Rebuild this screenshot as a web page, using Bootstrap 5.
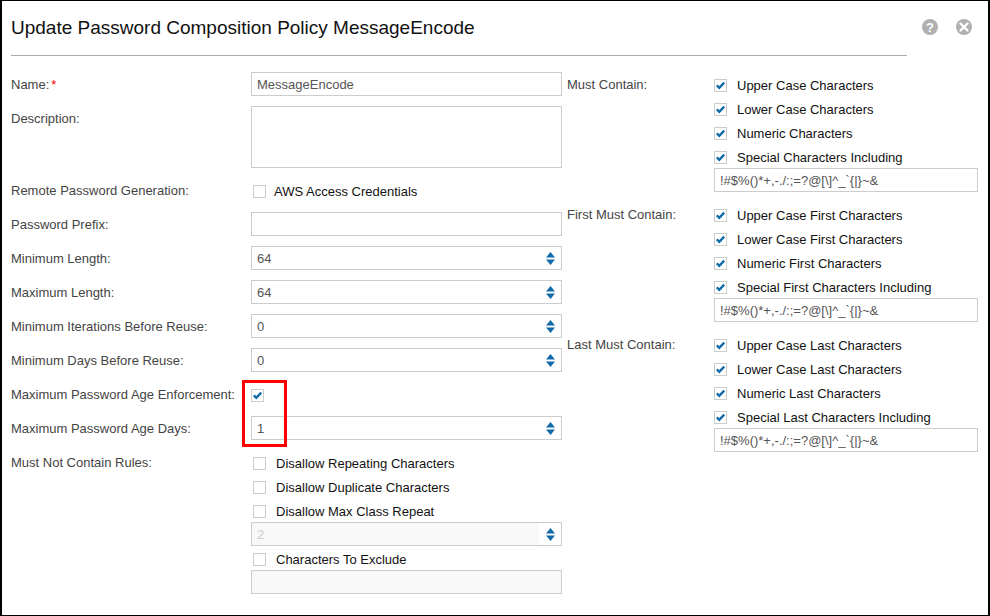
<!DOCTYPE html>
<html lang="en">
<head>
<meta charset="UTF-8">
<title>Update Password Composition Policy</title>
<link href="https://cdn.jsdelivr.net/npm/bootstrap@5.3.0/dist/css/bootstrap.min.css" rel="stylesheet">
<style>
  html, body { height: 100%; }
  body { background: #fff; font-family: "Liberation Sans", Arial, sans-serif; font-size: 13px; color: #444; overflow: hidden; }
  .dlg-frame { position: relative; width: 990px; height: 616px; border: 1px solid #000; border-left-width: 2px; border-right-width: 2px; padding: 0 0 0 9px; }
  .dlg-head { width: 896px; height: 55px; border-bottom: 1px solid #aaa; padding: 15px 0 0 0; }
  .dlg-title { font-size: 19px; line-height: 24px; font-weight: 400; color: #111; margin: 0; }
  .dlg-icons { position: absolute; top: 17px; left: 919px; gap: 16px; }
  .dlg-body { padding-top: 16px; }
  .col-left { width: 551px; }
  .field-row { display: flex; margin-bottom: 10px; min-height: 24px; }
  .field-label { width: 240px; height: 24px; flex: none; line-height: 24px; padding-top: 1px; }
  .field-label-r { width: 147px; height: 24px; flex: none; line-height: 24px; margin-left: 5px; padding-top: 1px; }
  .req { color: #f00; margin-left: 2px; }
  .form-control.fld { height: 24px; min-height: 24px; border: 1px solid #ccc; border-radius: 0; padding: 0 5px; font-size: 13px; line-height: 22px; color: #555; }
  .form-control.fld:disabled { background: #f8f8f8; color: #ccc; opacity: 1; }
  textarea.form-control.fld { height: 62px; resize: none; }
  .fld-w { width: 311px; }
  .fld-r { width: 264px; }
  .spin-wrap { position: relative; }
  .spin-btn { position: absolute; right: 1px; top: 1px; width: 22px; height: 22px; background: #fff; display: flex; align-items: center; justify-content: center; }
  .check-row { height: 24px; line-height: 20px; padding-top: 4px; color: #111; }
  .check-row .form-check-input { width: 13px; height: 13px; margin: -2px 10px 0 0; border: 1px solid #ccc; border-radius: 0; flex: none; box-shadow: none; }
  .check-row .form-check-input:checked { background-color: #fff; border-color: #ccc; background-size: 11px 11px; background-image: url("data:image/svg+xml,%3Csvg xmlns='http://www.w3.org/2000/svg' viewBox='0 0 11 11'%3E%3Cpath d='M1.800 5.400l2.500 2.400 4.900-5.200' fill='none' stroke='%23116bab' stroke-width='2.400'/%3E%3C/svg%3E"); }
  .check-in { padding-left: 2px; }
  .check-aws .form-check-input { margin-right: 8px; }
  .red-mark { position: absolute; left: 240px; top: 379px; width: 45px; height: 67px; border: 3px solid #f00; pointer-events: none; }
  .group-gap { margin-bottom: 10px; }
</style>
</head>
<body>
<div class="dlg-frame">
  <div class="dlg-head">
    <h1 class="dlg-title">Update Password Composition Policy MessageEncode</h1>
  </div>
  <div class="dlg-icons d-flex">
    <svg width="18" height="18" viewBox="0 0 18 18"><circle cx="9" cy="9" r="8" fill="#b0b0b0"/><text x="9" y="13.500" text-anchor="middle" font-family="Liberation Sans, sans-serif" font-size="13" font-weight="700" fill="#fff">?</text></svg>
    <svg width="18" height="18" viewBox="0 0 18 18"><circle cx="9" cy="9" r="8" fill="#b0b0b0"/><path d="M5.500 5.500l7 7M12.500 5.500l-7 7" stroke="#fff" stroke-width="2.400" stroke-linecap="round"/></svg>
  </div>

  <div class="dlg-body d-flex">
    <div class="col-left">
      <div class="field-row"><div class="field-label">Name:<span class="req">*</span></div><input class="form-control fld fld-w" value="MessageEncode"></div>
      <div class="field-row"><div class="field-label">Description:</div><textarea class="form-control fld fld-w"></textarea></div>
      <div class="field-row"><div class="field-label">Remote Password Generation:</div>
        <label class="check-row check-in check-aws d-flex align-items-center"><input type="checkbox" class="form-check-input">AWS Access Credentials</label></div>
      <div class="field-row"><div class="field-label">Password Prefix:</div><input class="form-control fld fld-w"></div>
      <div class="field-row"><div class="field-label">Minimum Length:</div><div class="spin-wrap fld-w"><input class="form-control fld" value="64"><span class="spin-btn"><svg width="9" height="13" viewBox="0 0 9 13"><path d="M4.500 0l4.500 5.500h-9zM4.500 13L0 7.500h9z" fill="#116bab"/></svg></span></div></div>
      <div class="field-row"><div class="field-label">Maximum Length:</div><div class="spin-wrap fld-w"><input class="form-control fld" value="64"><span class="spin-btn"><svg width="9" height="13" viewBox="0 0 9 13"><path d="M4.500 0l4.500 5.500h-9zM4.500 13L0 7.500h9z" fill="#116bab"/></svg></span></div></div>
      <div class="field-row"><div class="field-label">Minimum Iterations Before Reuse:</div><div class="spin-wrap fld-w"><input class="form-control fld" value="0"><span class="spin-btn"><svg width="9" height="13" viewBox="0 0 9 13"><path d="M4.500 0l4.500 5.500h-9zM4.500 13L0 7.500h9z" fill="#116bab"/></svg></span></div></div>
      <div class="field-row"><div class="field-label">Minimum Days Before Reuse:</div><div class="spin-wrap fld-w"><input class="form-control fld" value="0"><span class="spin-btn"><svg width="9" height="13" viewBox="0 0 9 13"><path d="M4.500 0l4.500 5.500h-9zM4.500 13L0 7.500h9z" fill="#116bab"/></svg></span></div></div>
      <div class="field-row"><div class="field-label">Maximum Password Age Enforcement:</div>
        <label class="check-row d-flex align-items-center"><input type="checkbox" class="form-check-input" checked></label></div>
      <div class="field-row"><div class="field-label">Maximum Password Age Days:</div><div class="spin-wrap fld-w"><input class="form-control fld" value="1"><span class="spin-btn"><svg width="9" height="13" viewBox="0 0 9 13"><path d="M4.500 0l4.500 5.500h-9zM4.500 13L0 7.500h9z" fill="#116bab"/></svg></span></div></div>
      <div class="d-flex">
        <div class="field-label">Must Not Contain Rules:</div>
        <div class="fld-w">
          <label class="check-row check-in d-flex align-items-center"><input type="checkbox" class="form-check-input">Disallow Repeating Characters</label>
          <label class="check-row check-in d-flex align-items-center"><input type="checkbox" class="form-check-input">Disallow Duplicate Characters</label>
          <label class="check-row check-in d-flex align-items-center"><input type="checkbox" class="form-check-input">Disallow Max Class Repeat</label>
          <div class="spin-wrap"><input class="form-control fld" value="2" disabled><span class="spin-btn"><svg width="9" height="13" viewBox="0 0 9 13"><path d="M4.500 0l4.500 5.500h-9zM4.500 13L0 7.500h9z" fill="#116bab"/></svg></span></div>
          <label class="check-row check-in d-flex align-items-center"><input type="checkbox" class="form-check-input">Characters To Exclude</label>
          <input class="form-control fld" disabled>
        </div>
      </div>
    </div>

    <div class="col-right">
      <div class="d-flex group-gap">
        <div class="field-label-r">Must Contain:</div>
        <div class="fld-r">
          <label class="check-row d-flex align-items-center"><input type="checkbox" class="form-check-input" checked>Upper Case Characters</label>
          <label class="check-row d-flex align-items-center"><input type="checkbox" class="form-check-input" checked>Lower Case Characters</label>
          <label class="check-row d-flex align-items-center"><input type="checkbox" class="form-check-input" checked>Numeric Characters</label>
          <label class="check-row d-flex align-items-center"><input type="checkbox" class="form-check-input" checked>Special Characters Including</label>
          <input class="form-control fld" value="!#$%()*+,-./:;=?@[\]^_`{|}~&amp;">
        </div>
      </div>
      <div class="d-flex group-gap">
        <div class="field-label-r">First Must Contain:</div>
        <div class="fld-r">
          <label class="check-row d-flex align-items-center"><input type="checkbox" class="form-check-input" checked>Upper Case First Characters</label>
          <label class="check-row d-flex align-items-center"><input type="checkbox" class="form-check-input" checked>Lower Case First Characters</label>
          <label class="check-row d-flex align-items-center"><input type="checkbox" class="form-check-input" checked>Numeric First Characters</label>
          <label class="check-row d-flex align-items-center"><input type="checkbox" class="form-check-input" checked>Special First Characters Including</label>
          <input class="form-control fld" value="!#$%()*+,-./:;=?@[\]^_`{|}~&amp;">
        </div>
      </div>
      <div class="d-flex">
        <div class="field-label-r">Last Must Contain:</div>
        <div class="fld-r">
          <label class="check-row d-flex align-items-center"><input type="checkbox" class="form-check-input" checked>Upper Case Last Characters</label>
          <label class="check-row d-flex align-items-center"><input type="checkbox" class="form-check-input" checked>Lower Case Last Characters</label>
          <label class="check-row d-flex align-items-center"><input type="checkbox" class="form-check-input" checked>Numeric Last Characters</label>
          <label class="check-row d-flex align-items-center"><input type="checkbox" class="form-check-input" checked>Special Last Characters Including</label>
          <input class="form-control fld" value="!#$%()*+,-./:;=?@[\]^_`{|}~&amp;">
        </div>
      </div>
    </div>
  </div>
  <div class="red-mark"></div>
</div>
<script src="https://cdn.jsdelivr.net/npm/bootstrap@5.3.0/dist/js/bootstrap.bundle.min.js"></script>
</body>
</html>
